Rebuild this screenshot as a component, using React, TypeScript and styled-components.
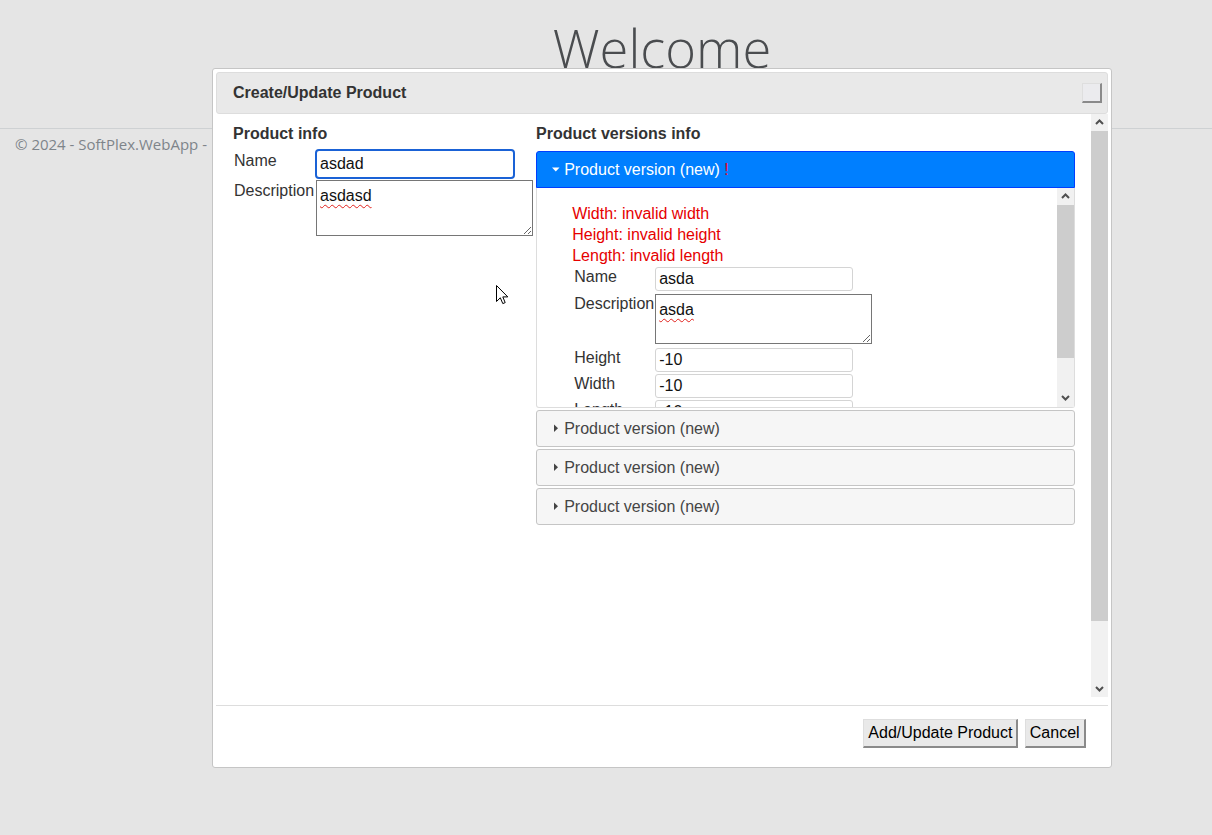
import React from "react";
import styled, { createGlobalStyle, css } from "styled-components";

const GlobalStyle = createGlobalStyle`
  html, body { margin: 0; padding: 0; height: 100%; background: #fff; }
  body { font-family: "Open Sans", "Noto Sans", sans-serif; color: #212529; }
  #root { height: 100%; }
  *, *::before, *::after { box-sizing: border-box; }
`;

const bevel = css`
  background: #e9e9e9;
  border-style: solid;
  border-width: 1px 2px 2px 1px;
  border-color: #dedede #8a8a8a #8a8a8a #dedede;
  border-radius: 0;
`;

const Page = styled.div`
  position: relative;
  width: 100%;
  height: 835px;
  overflow: hidden;
`;

const Main = styled.main`
  height: 128px;
  padding: 16px 0 0 112px;
  text-align: center;
`;

const Welcome = styled.h1`
  margin: 0;
  font-size: 52.5px;
  font-weight: 300;
  line-height: 1.2;
`;

const Footer = styled.footer`
  border-top: 1px solid #dee2e6;
  padding: 0 15px;
  line-height: 30px;
  font-size: 15px;
  color: #6c757d;
  white-space: nowrap;
`;

const Overlay = styled.div`
  position: absolute;
  inset: 0;
  background: rgba(170, 170, 170, 0.3);
`;

const Dialog = styled.div`
  position: absolute;
  left: 212px;
  top: 68px;
  width: 900px;
  height: 700px;
  padding: 3px;
  display: flex;
  flex-direction: column;
  background: #fff;
  border: 1px solid #c5c5c5;
  border-radius: 3px;
  font-family: "Liberation Sans", Arial, Helvetica, sans-serif;
  font-size: 16px;
  color: #333;
`;

const TitleBar = styled.div`
  display: flex;
  align-items: center;
  padding: 6.4px 16px;
  background: #e9e9e9;
  border: 1px solid #ddd;
  border-radius: 3px;
  font-weight: bold;
  color: #333;
`;

const Title = styled.span`
  flex: 1;
  margin: 1.6px 0;
  line-height: 24px;
  white-space: nowrap;
`;

const CloseButton = styled.button`
  width: 20px;
  height: 20px;
  padding: 0;
  margin-right: -11px;
  ${bevel};
  background: #ebebee;
`;

/* scrollbar drawn in flow beside the scrolled content */
const ScrollBar = styled.div`
  flex: none;
  width: 17px;
  display: flex;
  flex-direction: column;
  background: #f1f1f1;
`;

const ScrollArrow = styled.div`
  flex: none;
  height: 17px;
  display: flex;
  align-items: center;
  justify-content: center;
`;

const ScrollTrack = styled.div`
  flex: 1;
  display: flex;
  flex-direction: column;
`;

const ScrollThumb = styled.div<{ $size: number }>`
  flex: none;
  height: ${(p) => p.$size}px;
  background: #cdcdcd;
`;

const Chevron = styled.svg`
  width: 9px;
  height: 6px;
`;

const VScroll = ({ thumb }: { thumb: number }) => (
  <ScrollBar aria-hidden>
    <ScrollArrow>
      <Chevron viewBox="0 0 9 6">
        <path d="M1 5 4.5 1.5 8 5" fill="none" stroke="#505050" strokeWidth="2" />
      </Chevron>
    </ScrollArrow>
    <ScrollTrack>
      <ScrollThumb $size={thumb} />
    </ScrollTrack>
    <ScrollArrow>
      <Chevron viewBox="0 0 9 6">
        <path d="M1 1 4.5 4.5 8 1" fill="none" stroke="#505050" strokeWidth="2" />
      </Chevron>
    </ScrollArrow>
  </ScrollBar>
);

const Content = styled.div`
  flex: 1;
  min-height: 0;
  display: flex;
`;

const ContentBody = styled.div`
  flex: 1;
  min-width: 0;
  overflow: hidden;
  padding: 8px 16px 8px 17px;
`;

const Columns = styled.div`
  display: grid;
  grid-template-columns: 303px 1fr;
  align-items: start;
`;

const Column = styled.section`
  display: flex;
  flex-direction: column;
`;

const SectionTitle = styled.h2`
  margin: 0 0 3px;
  font-size: 16px;
  font-weight: bold;
  line-height: 24px;
  color: #333;
`;

const FormGrid = styled.div<{ $gap: number }>`
  display: grid;
  grid-template-columns: 83px auto;
  justify-content: start;
  align-items: start;
  row-gap: ${(p) => p.$gap}px;
`;

const FieldLabel = styled.label<{ $top: number; $left: number }>`
  padding: ${(p) => p.$top}px 0 0 ${(p) => p.$left}px;
  line-height: normal;
  color: #333;
  white-space: nowrap;
`;

const TextInput = styled.input<{ $focused?: boolean }>`
  width: 198px;
  height: 24px;
  margin: 0;
  padding: 0 3px;
  border: 1px solid #d4d4d4;
  border-radius: 3px;
  background: #fff;
  font: 16px "Liberation Sans", Arial, sans-serif;
  color: #111;
  outline: none;
  ${(p) =>
    p.$focused &&
    css`
      width: 200px;
      height: 30px;
      margin-left: -1px;
      border: 2px solid #1a62d6;
      border-radius: 4px;
    `}
`;

const TextArea = styled.div<{ $h: number; $mb: number }>`
  width: 217px;
  height: ${(p) => p.$h}px;
  margin: 1px 0 ${(p) => p.$mb}px;
  padding: 3px 3px 2px;
  border: 1px solid #767676;
  background: #fff;
  line-height: 24px;
  color: #111;
  overflow: auto;
  resize: both;
`;

const Misspelled = styled.span`
  text-decoration: underline wavy #e0201b;
  text-decoration-thickness: 1px;
  text-underline-offset: 3px;
  text-decoration-skip-ink: none;
`;

const Accordion = styled.div`
  display: flex;
  flex-direction: column;
`;

const AccordionHeader = styled.div<{ $active?: boolean }>`
  display: flex;
  align-items: center;
  margin-top: 2px;
  padding: 8px 8px 8px 11.2px;
  background: #f6f6f6;
  border: 1px solid #c5c5c5;
  border-radius: 3px;
  color: #454545;
  line-height: 19px;
  cursor: pointer;
  ${(p) =>
    p.$active &&
    css`
      background: #007fff;
      border-color: #003eff;
      color: #fff;
      border-radius: 3px 3px 0 0;
    `}
`;

const HeaderIcon = styled.svg`
  width: 16px;
  height: 16px;
  flex: none;
`;

const Bang = styled.span`
  color: #e8001c;
`;

const Panel = styled.div`
  height: 220px;
  display: flex;
  border: 1px solid #ddd;
  border-top: 0;
  border-radius: 0 0 3px 3px;
  color: #333;
`;

const PanelBody = styled.div`
  flex: 1;
  min-width: 0;
  overflow: hidden;
  padding: 16px 35.2px;
`;

const ErrorList = styled.div`
  margin-bottom: 0.5px;
  color: #e60000;
  line-height: 20.8px;
`;

const ButtonPane = styled.div`
  display: flex;
  justify-content: flex-end;
  margin-top: 8px;
  padding: 4.8px 16px 8px 6.4px;
  border-top: 1px solid #ddd;
`;

const DialogButton = styled.button`
  margin: 8px 6.4px 8px 0;
  padding: 4px;
  font: 16px "Liberation Sans", Arial, sans-serif;
  line-height: normal;
  color: #000;
  ${bevel};
`;

const Cursor = styled.svg`
  position: absolute;
  left: 496px;
  top: 285px;
  width: 13px;
  height: 20px;
  pointer-events: none;
`;

const Caret = ({ open, color }: { open: boolean; color: string }) => (
  <HeaderIcon viewBox="0 0 16 16" aria-hidden>
    {open ? (
      <polygon points="4,6.5 11.5,6.5 7.75,10.5" fill={color} />
    ) : (
      <polygon points="6,4.5 10,8.25 6,12" fill={color} />
    )}
  </HeaderIcon>
);

const versions = [1, 2, 3];

export default function App() {
  return (
    <>
      <GlobalStyle />
      <Page>
        <Main>
          <Welcome>Welcome</Welcome>
        </Main>
        <Footer>© 2024 - SoftPlex.WebApp -</Footer>
        <Overlay />
        <Dialog role="dialog" aria-label="Create/Update Product">
          <TitleBar>
            <Title>Create/Update Product</Title>
            <CloseButton aria-label="Close" />
          </TitleBar>
          <Content>
            <ContentBody>
              <Columns>
                <Column>
                  <SectionTitle>Product info</SectionTitle>
                  <FormGrid $gap={0}>
                    <FieldLabel $top={3} $left={1}>Name</FieldLabel>
                    <TextInput $focused defaultValue="asdad" />
                    <FieldLabel $top={3} $left={1}>Description</FieldLabel>
                    <TextArea $h={56} $mb={0} role="textbox">
                      <Misspelled>asdasd</Misspelled>
                    </TextArea>
                  </FormGrid>
                </Column>
                <Column>
                  <SectionTitle>Product versions info</SectionTitle>
                  <Accordion>
                    <AccordionHeader $active>
                      <Caret open color="#fff" />
                      Product version (new)&nbsp;<Bang>!</Bang>
                    </AccordionHeader>
                    <Panel>
                      <PanelBody>
                        <ErrorList>
                          <div>Width: invalid width</div>
                          <div>Height: invalid height</div>
                          <div>Length: invalid length</div>
                        </ErrorList>
                        <FormGrid $gap={2}>
                          <FieldLabel $top={1} $left={2}>Name</FieldLabel>
                          <TextInput defaultValue="asda" />
                          <FieldLabel $top={2} $left={2}>Description</FieldLabel>
                          <TextArea $h={50} $mb={2} role="textbox">
                            <Misspelled>asda</Misspelled>
                          </TextArea>
                          <FieldLabel $top={1} $left={2}>Height</FieldLabel>
                          <TextInput defaultValue="-10" />
                          <FieldLabel $top={1} $left={2}>Width</FieldLabel>
                          <TextInput defaultValue="-10" />
                          <FieldLabel $top={1} $left={2}>Length</FieldLabel>
                          <TextInput defaultValue="-10" />
                        </FormGrid>
                      </PanelBody>
                      <VScroll thumb={153} />
                    </Panel>
                    {versions.map((v) => (
                      <AccordionHeader key={v}>
                        <Caret open={false} color="#444" />
                        Product version (new)
                      </AccordionHeader>
                    ))}
                  </Accordion>
                </Column>
              </Columns>
            </ContentBody>
            <VScroll thumb={490} />
          </Content>
          <ButtonPane>
            <DialogButton>Add/Update Product</DialogButton>
            <DialogButton>Cancel</DialogButton>
          </ButtonPane>
        </Dialog>
        <Cursor viewBox="0 0 13 20" aria-hidden>
          <path
            d="M0.5 0.5 V16.5 L4.3 12.8 L6.8 18.6 L9.2 17.6 L6.8 11.9 H11.8 Z"
            fill="#fff"
            stroke="#000"
            strokeWidth="1"
            strokeLinejoin="round"
          />
        </Cursor>
      </Page>
    </>
  );
}
